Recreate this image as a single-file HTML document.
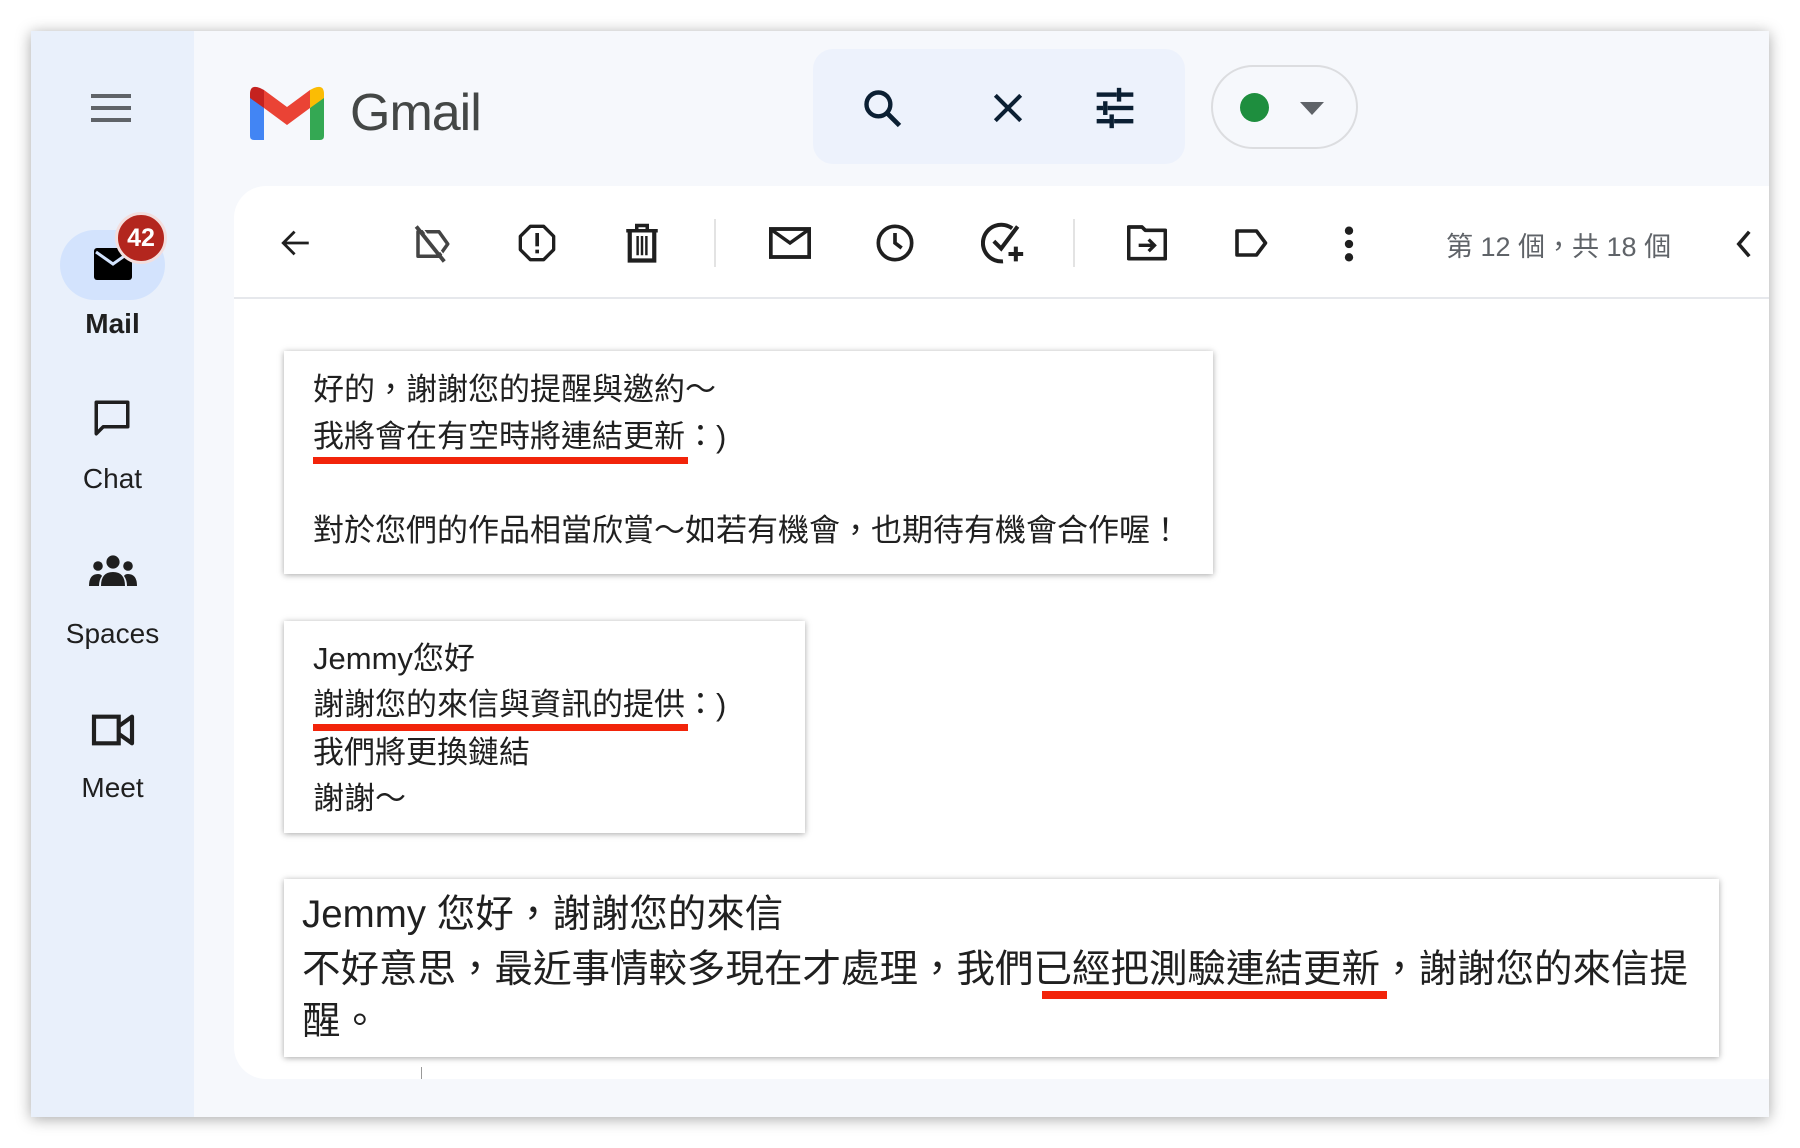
<!DOCTYPE html>
<html><head><meta charset="utf-8"><style>
*{margin:0;padding:0;box-sizing:border-box}
body{width:1800px;height:1148px;background:#fff;position:relative;overflow:hidden;font-family:"Liberation Sans","Noto Sans CJK TC",sans-serif}
.win{position:absolute;left:31px;top:31px;width:1738px;height:1086px;background:#f6f8fc;box-shadow:0 2px 14px rgba(0,0,0,.35);overflow:hidden}
.side{position:absolute;left:0;top:0;width:163px;height:100%;background:#e9f0fb}
.a{position:absolute}
.lbl{position:absolute;width:163px;text-align:center;font-size:28px;color:#1f1f1f}
.card{position:absolute;left:203px;top:155px;width:1600px;height:893px;background:#fff;border-radius:32px}
.tb{position:absolute;left:203px;top:266px;width:1600px;height:2px;background:#e6e8ec}
.box{position:absolute;background:#fff;box-shadow:0 1px 6px rgba(0,0,0,.35);font-family:"Liberation Sans","Noto Sans CJK TC",sans-serif;color:#202020}
.box div{position:absolute;white-space:nowrap}
.ul{position:absolute;background:#f2240a}
svg{position:absolute}
</style></head><body>
<div class="win">
<div class="side"></div>
<svg style="left:60px;top:60px" width="40" height="34" viewBox="0 0 40 34"><g fill="#5f6368"><rect x="0" y="3" width="40" height="4"/><rect x="0" y="15" width="40" height="4"/><rect x="0" y="27" width="40" height="4"/></g></svg>
<svg style="left:219px;top:55px" width="74" height="54" viewBox="0 0 74 54">
<path d="M0 8 L0 50 Q0 54 4 54 L14 54 L14 22 Z" fill="#4285f4"/>
<path d="M60 22 L60 54 L70 54 Q74 54 74 50 L74 8 Z" fill="#34a853"/>
<path d="M60 4 L60 22 L74 12 L74 8 Q74 -2 64 2 Z" fill="#fbbc04"/>
<path d="M14 22 L37 39 L60 22 L60 4 L37 21 L14 4 Z" fill="#ea4335"/>
<path d="M0 8 L0 12 L14 22 L14 4 L10 2 Q0 -2 0 8 Z" fill="#c5221f"/>
</svg>
<div class="a" style="left:319px;top:52px;font-size:52px;color:#444746;letter-spacing:-1px">Gmail</div>
<div class="a" style="left:782px;top:18px;width:372px;height:115px;background:#edf2fc;border-radius:20px"></div>
<svg style="left:830px;top:56px" width="44" height="44" viewBox="0 0 24 24"><circle cx="9.5" cy="9.5" r="6.5" fill="none" stroke="#0b1f33" stroke-width="2.4"/><path d="M14.5 14.5 L21 21" stroke="#0b1f33" stroke-width="2.6"/></svg>
<svg style="left:958px;top:58px" width="38" height="38" viewBox="0 0 24 24"><path d="M4 4 L20 20 M20 4 L4 20" stroke="#0b1f33" stroke-width="2.6"/></svg>
<svg style="left:1061px;top:55px" width="46" height="44" viewBox="0 0 24 24"><g fill="#0b1f33"><rect x="2" y="3.5" width="11" height="2.4"/><rect x="15" y="3.5" width="7" height="2.4"/><rect x="13" y="1" width="2.4" height="7.5"/><rect x="2" y="10.8" width="3.5" height="2.4"/><rect x="8" y="10.8" width="14" height="2.4"/><rect x="5.5" y="8.3" width="2.4" height="7.5"/><rect x="2" y="18" width="7" height="2.4"/><rect x="11.5" y="18" width="10.5" height="2.4"/><rect x="9" y="15.5" width="2.4" height="7.5"/></g></svg>
<div class="a" style="left:1180px;top:34px;width:147px;height:84px;border:2px solid #dcdde0;border-radius:42px"></div>
<div class="a" style="left:1209px;top:62px;width:29px;height:29px;border-radius:50%;background:#1e8e3e"></div>
<svg style="left:1268px;top:70px" width="26" height="16" viewBox="0 0 26 16"><path d="M1 1 L25 1 L13 14 Z" fill="#5f6368"/></svg>

<div class="a" style="left:29px;top:199px;width:105px;height:70px;border-radius:35px;background:#d3e3fd"></div>
<svg style="left:63px;top:217px" width="38" height="32" viewBox="0 0 38 32"><rect x="0" y="0" width="38" height="32" rx="3" fill="#000"/><path d="M2 4 L19 16 L36 4" fill="none" stroke="#d3e3fd" stroke-width="3"/></svg>
<div class="a" style="left:84px;top:181px;width:52px;height:52px;border-radius:50%;background:#b3261e;border:3px solid #f2dede;color:#fff;font-size:25px;font-weight:bold;text-align:center;line-height:46px">42</div>
<div class="lbl" style="top:277px;font-weight:bold">Mail</div>
<svg style="left:60px;top:366px" width="42" height="42" viewBox="0 0 24 24"><path d="M3 3 H21 V17 H7 L3 21 Z" fill="none" stroke="#1f1f1f" stroke-width="2" stroke-linejoin="round"/></svg>
<div class="lbl" style="top:432px">Chat</div>
<svg style="left:58px;top:521px" width="48" height="40" viewBox="0 0 24 20"><g fill="#1f1f1f"><circle cx="12" cy="5" r="3.3"/><circle cx="4.5" cy="7" r="2.4"/><circle cx="19.5" cy="7" r="2.4"/><path d="M6 17 Q6 10 12 10 Q18 10 18 17 Z"/><path d="M0 17 Q0 11 4.5 11 Q6 11 6.5 12 Q5 14 5 17 Z"/><path d="M24 17 Q24 11 19.5 11 Q18 11 17.5 12 Q19 14 19 17 Z"/></g></svg>
<div class="lbl" style="top:587px">Spaces</div>
<svg style="left:59px;top:680px" width="46" height="38" viewBox="0 0 24 20"><path d="M2 3 H15 V17 H2 Z" fill="none" stroke="#1f1f1f" stroke-width="2.2"/><path d="M15 8 L22 3 V17 L15 12" fill="none" stroke="#1f1f1f" stroke-width="2.2" stroke-linejoin="round"/></svg>
<div class="lbl" style="top:741px">Meet</div>

<div class="card"></div>
<div class="tb"></div>
<svg style="left:247px;top:195px" width="36" height="34" viewBox="0 0 24 24"><path d="M21 12 H4 M11 4 L3 12 L11 20" fill="none" stroke="#1f1f1f" stroke-width="2"/></svg>
<svg style="left:380px;top:192px" width="42" height="42" viewBox="0 0 24 24"><path d="M4 5 H16 L21 12 L16 19 H4 Z" fill="none" stroke="#444" stroke-width="2" stroke-linejoin="round"/><path d="M3 2 L19 22" stroke="#444" stroke-width="2.2"/><path d="M3 2 L19 22" stroke="#fff" stroke-width="0.8" transform="translate(1.6,-1.2)"/></svg>
<svg style="left:486px;top:192px" width="40" height="40" viewBox="0 0 24 24"><path d="M8 2 H16 L22 8 V16 L16 22 H8 L2 16 V8 Z" fill="none" stroke="#1f1f1f" stroke-width="2" stroke-linejoin="round"/><rect x="11" y="6" width="2.2" height="8" fill="#1f1f1f"/><rect x="11" y="16" width="2.2" height="2.2" fill="#1f1f1f"/></svg>
<svg style="left:593px;top:191px" width="36" height="42" viewBox="0 0 20 24"><path d="M1 5 H19 M7 5 V2 H13 V5" fill="none" stroke="#1f1f1f" stroke-width="2"/><path d="M3 5 V22 H17 V5" fill="none" stroke="#1f1f1f" stroke-width="2.4"/><path d="M7.5 8 V19 M10 8 V19 M12.5 8 V19" stroke="#1f1f1f" stroke-width="1.4"/></svg>
<div class="a" style="left:683px;top:188px;width:2px;height:48px;background:#e3e3e3"></div>
<svg style="left:738px;top:196px" width="42" height="32" viewBox="0 0 24 18"><rect x="1" y="1" width="22" height="16" fill="none" stroke="#1f1f1f" stroke-width="2.2"/><path d="M1.5 1.5 L12 9 L22.5 1.5" fill="none" stroke="#1f1f1f" stroke-width="2"/></svg>
<svg style="left:844px;top:192px" width="40" height="40" viewBox="0 0 24 24"><circle cx="12" cy="12" r="10" fill="none" stroke="#1f1f1f" stroke-width="2.2"/><path d="M12 6 V12 L16 15" fill="none" stroke="#1f1f1f" stroke-width="2.2"/></svg>
<svg style="left:950px;top:190px" width="44" height="44" viewBox="0 0 24 24"><path d="M17 4 A10 10 0 1 0 12 22" fill="none" stroke="#1f1f1f" stroke-width="2.2"/><path d="M7 11 L11 15 L20 3" fill="none" stroke="#1f1f1f" stroke-width="2.2"/><path d="M19 14 V22 M15 18 H23" stroke="#1f1f1f" stroke-width="2.2"/></svg>
<div class="a" style="left:1042px;top:188px;width:2px;height:48px;background:#e3e3e3"></div>
<svg style="left:1096px;top:192px" width="40" height="38" viewBox="0 0 24 22"><path d="M1 2 H9 L11 4 H23 V21 H1 Z" fill="none" stroke="#1f1f1f" stroke-width="2.2" stroke-linejoin="round"/><path d="M7 13 H16 M13 9.5 L16.5 13 L13 16.5" fill="none" stroke="#1f1f1f" stroke-width="2"/></svg>
<svg style="left:1203px;top:197px" width="36" height="30" viewBox="0 0 24 20"><path d="M2 2 H15 L21 10 L15 18 H2 Z" fill="none" stroke="#1f1f1f" stroke-width="2.4" stroke-linejoin="round"/></svg>
<svg style="left:1310px;top:194px" width="16" height="38" viewBox="0 0 8 20"><g fill="#1f1f1f"><circle cx="4" cy="3" r="2.2"/><circle cx="4" cy="10" r="2.2"/><circle cx="4" cy="17" r="2.2"/></g></svg>
<div class="a" style="left:1415px;top:194px;font-size:27px;color:#5f6368;white-space:nowrap">第 12 個，共 18 個</div>
<svg style="left:1703px;top:199px" width="20" height="28" viewBox="0 0 10 16"><path d="M8 1 L2 8 L8 15" fill="none" stroke="#1f1f1f" stroke-width="2"/></svg>

<div class="box" style="left:253px;top:320px;width:929px;height:223px;font-size:31px">
<div style="left:29px;top:13px">好的，謝謝您的提醒與邀約～</div>
<div style="left:29px;top:60px">我將會在有空時將連結更新：)</div>
<div style="left:29px;top:154px">對於您們的作品相當欣賞～如若有機會，也期待有機會合作喔！</div>
</div>
<div class="ul" style="left:282px;top:426px;width:375px;height:7px"></div>
<div class="box" style="left:253px;top:590px;width:521px;height:212px;font-size:31px">
<div style="left:29px;top:12px">Jemmy您好</div>
<div style="left:29px;top:58px">謝謝您的來信與資訊的提供：)</div>
<div style="left:29px;top:106px">我們將更換鏈結</div>
<div style="left:29px;top:152px">謝謝～</div>
</div>
<div class="ul" style="left:282px;top:693px;width:375px;height:7px"></div>
<div class="box" style="left:253px;top:848px;width:1435px;height:178px;font-size:38.5px">
<div style="left:18px;top:4px">Jemmy 您好，謝謝您的來信</div>
<div style="left:18px;top:59px">不好意思，最近事情較多現在才處理，我們已經把測驗連結更新，謝謝您的來信提</div>
<div style="left:18px;top:111px">醒。</div>
</div>
<div class="ul" style="left:1011px;top:960px;width:345px;height:8px"></div>
<div class="a" style="left:390px;top:1036px;width:1px;height:12px;background:#999"></div>
</div>
</body></html>
